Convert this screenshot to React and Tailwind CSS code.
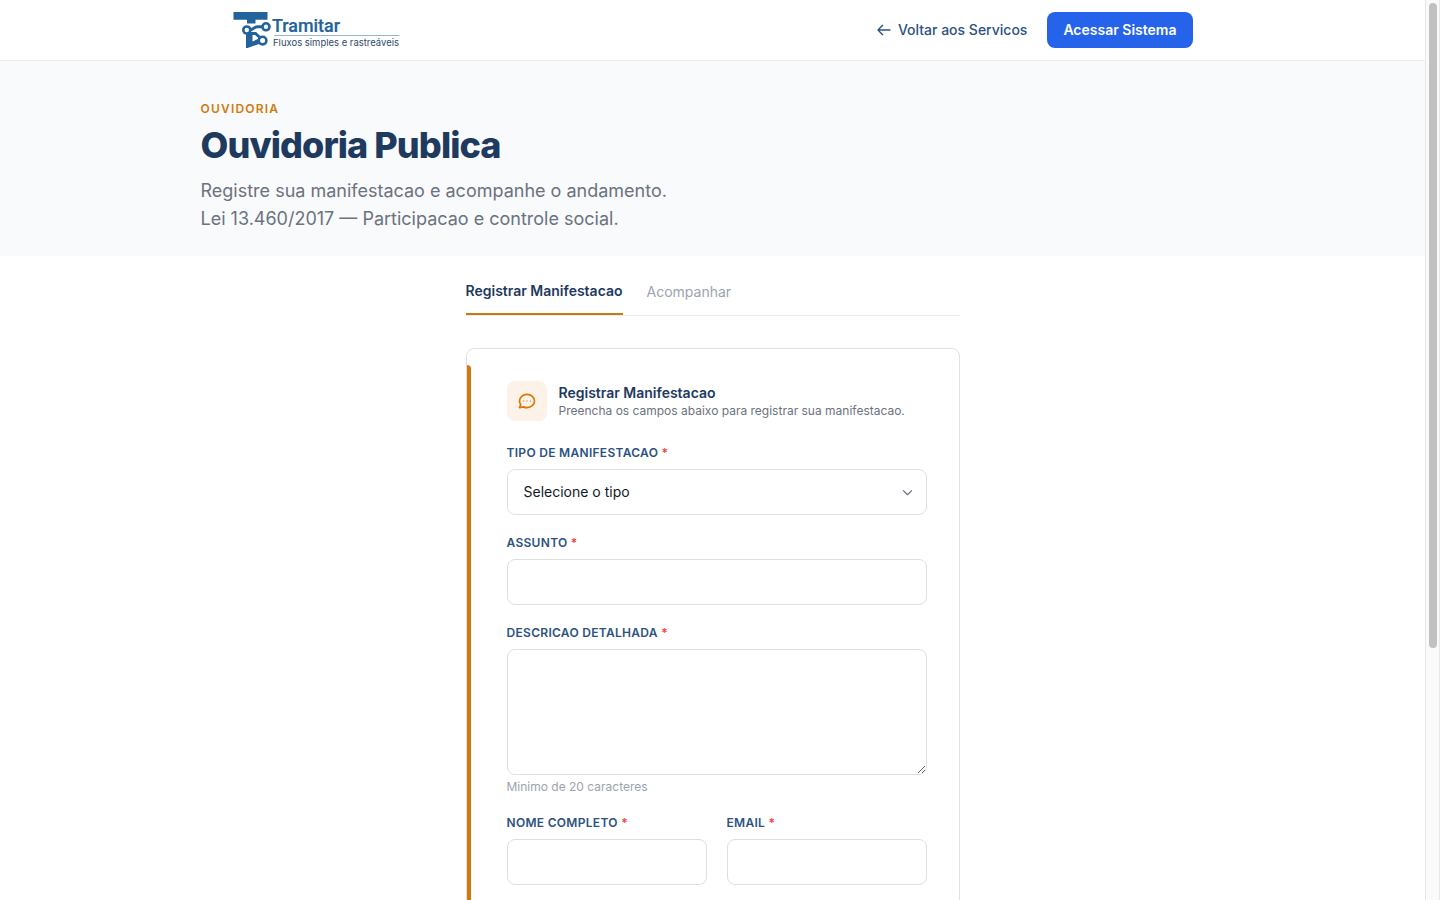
function Logo() {
  return (
    <svg width="172" height="40" viewBox="0 0 172 40" overflow="visible" className="-mr-1" role="img" aria-label="Tramitar">
      <g fill="#23639c">
        <path d="M0.5 2H34.5V9.7H22.5V13.5H14V9.7H0.5Z" />
        <path d="M13 23H19.5V31.5L26 28.5V34L14.5 38H13Z" />
      </g>
      <g fill="none" stroke="#23639c" strokeWidth="3">
        <path d="M30 16.8H24.5C20 16.8 21 20 16 20" />
        <path d="M16 23.5H22.5L28 28.5" />
        <circle cx="33" cy="16.8" r="3.5" strokeWidth="2.6" fill="#fff" />
        <circle cx="13.8" cy="20" r="3.5" strokeWidth="2.6" fill="#fff" />
        <circle cx="29.6" cy="30.6" r="3.8" strokeWidth="2.6" fill="#fff" />
      </g>
      <text x="39" y="21.7" textLength="68" lengthAdjust="spacingAndGlyphs" fontFamily="Roboto, sans-serif" fontSize="19" fontWeight="500" fill="#23639c" stroke="#23639c" strokeWidth="0.2">Tramitar</text>
      <path d="M41 25.5H166.5" stroke="#8fb8d8" strokeWidth="1" />
      <text x="40" y="35.5" textLength="126" lengthAdjust="spacingAndGlyphs" fontFamily="Inter, sans-serif" fontSize="9.6" fill="#2c4a6b">Fluxos simples e rastreáveis</text>
    </svg>
  );
}

function Icon({ size = 16, className, d, children }) {
  return (
    <svg width={size} height={size} viewBox="0 0 24 24" fill="none" stroke="currentColor" strokeWidth="2" strokeLinecap="round" strokeLinejoin="round" className={className}>
      <path d={d} />
      {children}
    </svg>
  );
}

function Label({ children }) {
  return (
    <label className="block text-xs leading-4 font-semibold uppercase tracking-wide text-[#2c5282] mb-2">
      {children} <span className="text-[#ef4444]">*</span>
    </label>
  );
}

const fieldClass = 'block w-full rounded-lg border border-[#dcdfe3] bg-white px-4 text-sm outline-none';

export default function App() {
  return (
    <div className="flex h-screen overflow-hidden bg-white font-['Inter',sans-serif]">
      <div className="flex-1 min-w-0 h-full overflow-hidden">
        {/* Header */}
        <header className="h-[61px] border-b border-[#eceff1] bg-white">
          <div className="max-w-5xl h-[60px] mx-auto px-8 flex items-center justify-between">
            <Logo />
            <nav className="flex items-center gap-5">
              <a href="#" className="flex items-center gap-1.5 text-sm font-medium text-[#2c5282]">
                <Icon d="M10 19l-7-7m0 0l7-7m-7 7h18" />
                Voltar aos Servicos
              </a>
              <a href="#" className="h-9 px-4 flex items-center rounded-lg bg-[#2563eb] text-sm font-semibold text-white">
                Acessar Sistema
              </a>
            </nav>
          </div>
        </header>

        {/* Hero */}
        <section className="h-[195px] bg-[#f9fafc]">
          <div className="max-w-5xl mx-auto pt-10">
            <p className="text-xs leading-4 font-semibold uppercase tracking-[0.1em] text-[#d17a0c]">Ouvidoria</p>
            <h1 className="mt-2 text-4xl leading-10 font-extrabold tracking-tight text-[#1e3a5f]">Ouvidoria Publica</h1>
            <p className="mt-3 text-lg leading-7 text-[#6b7280]">
              Registre sua manifestacao e acompanhe o andamento.
              <br />
              Lei 13.460/2017 — Participacao e controle social.
            </p>
          </div>
        </section>

        <main className="w-[494px] mx-auto">
          {/* Tabs */}
          <div className="h-[60px] flex items-end gap-6 border-b border-[#e9ebee] text-sm">
            <button className="h-[34px] pb-3 border-b-2 border-[#c27c0e] font-semibold text-[#1e3a5f]">
              Registrar Manifestacao
            </button>
            <button className="h-[34px] pb-3 text-[#9ca3af]">Acompanhar</button>
          </div>

          {/* Form card */}
          <div className="relative mt-8 h-[720px] rounded-lg border border-[#dfe1e5] bg-white pt-8 pr-8 pl-10">
            <span className="absolute left-0 top-4 bottom-4 w-1 rounded-r bg-[#d17a0c]" />

            <div className="flex items-center gap-3">
              <div className="size-10 rounded-lg bg-[#fdf2e7] flex items-center justify-center">
                <Icon
                  size={20}
                  className="text-[#d97706]"
                  d="M21 12c0 4.418-4.03 8-9 8a9.863 9.863 0 01-4.255-.949L3 20l1.395-3.72C3.512 15.042 3 13.574 3 12c0-4.418 4.03-8 9-8s9 3.582 9 8z"
                >
                  <path d="M8 12h.01M12 12h.01M16 12h.01" opacity="0.6" />
                </Icon>
              </div>
              <div>
                <h2 className="text-sm leading-5 font-semibold text-[#1e3a5f]">Registrar Manifestacao</h2>
                <p className="text-xs leading-4 text-[#6b7280]">Preencha os campos abaixo para registrar sua manifestacao.</p>
              </div>
            </div>

            <form className="mt-6 flex flex-col gap-5">
              <div>
                <Label>Tipo de manifestacao</Label>
                <div className={`${fieldClass} h-[46px] flex! items-center justify-between pr-[11px]! text-[#111827]`}>
                  <span>Selecione o tipo</span>
                  <Icon size={15} className="text-[#6b7280]" d="M18.5 9L12 15.5 5.5 9" />
                </div>
              </div>
              <div>
                <Label>Assunto</Label>
                <input className={`${fieldClass} h-[46px]`} />
              </div>
              <div>
                <Label>Descricao detalhada</Label>
                <textarea className={`${fieldClass} h-[126px] resize-y`} />
                <p className="mt-1 text-xs leading-4 text-[#9ca3af]">Minimo de 20 caracteres</p>
              </div>
              <div className="grid grid-cols-2 gap-5">
                <div>
                  <Label>Nome completo</Label>
                  <input className={`${fieldClass} h-[46px]`} />
                </div>
                <div>
                  <Label>Email</Label>
                  <input className={`${fieldClass} h-[46px]`} />
                </div>
              </div>
            </form>
          </div>
        </main>
      </div>

      {/* Scrollbar */}
      <div className="w-[15px] h-full border-x border-[#e8e8e8] bg-[#fafafa] pt-[3px] flex justify-center">
        <div className="w-2 h-[645px] rounded-full bg-[#c1c1c1]" />
      </div>
    </div>
  );
}
